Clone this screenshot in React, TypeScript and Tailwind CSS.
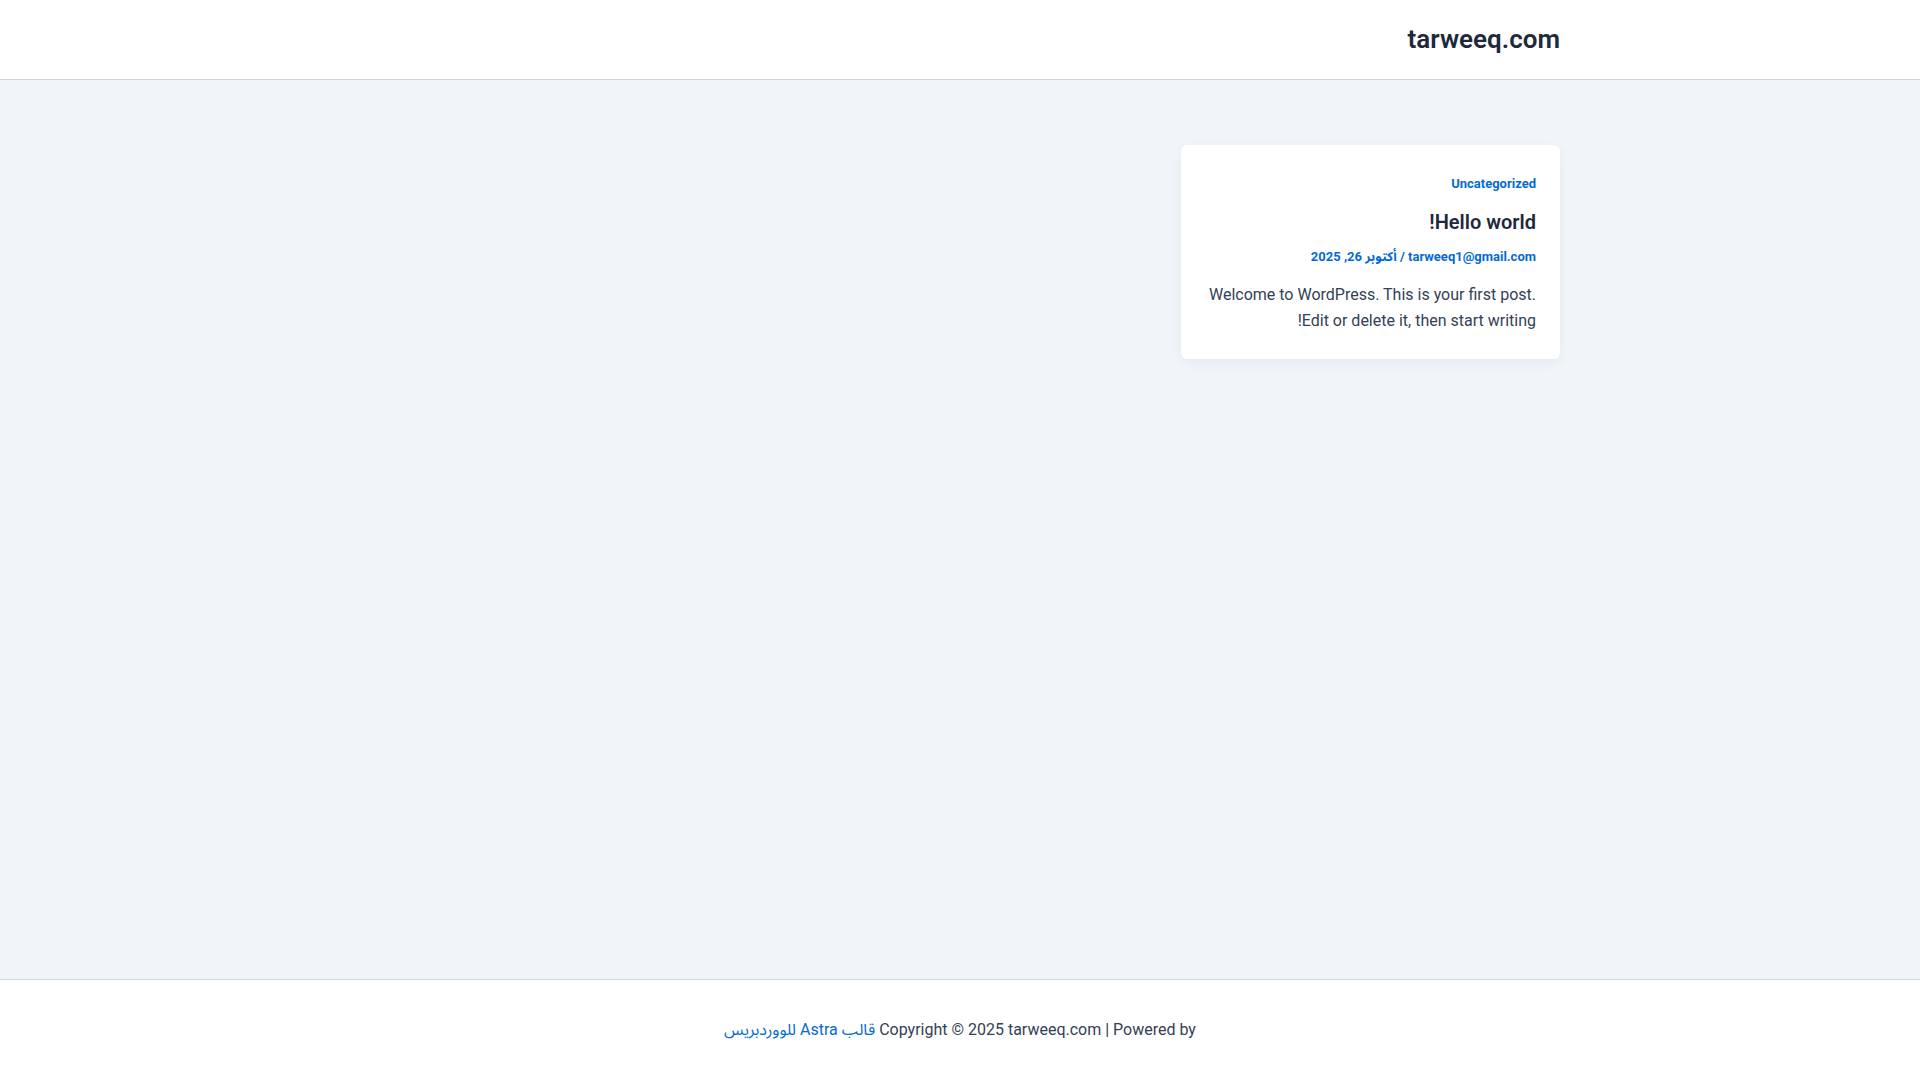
export default function App() {
  return (
    <div
      dir="rtl"
      className="min-h-screen flex flex-col bg-[#f0f5fa] text-[#334155]"
      style={{ fontFamily: 'Roboto, "Noto Sans Arabic", "Noto Naskh Arabic", sans-serif' }}
    >
      <header className="h-[80px] bg-white border-b border-[#d1d5db] shrink-0">
        <div className="max-w-[1200px] mx-auto h-full flex items-center">
          <a href="#" className="-mt-[2px] text-[26px] font-semibold text-[#1e293b] leading-none">
            tarweeq.com
          </a>
        </div>
      </header>

      <main className="flex-1 pt-[65px]">
        <div className="max-w-[1200px] mx-auto grid grid-cols-3 gap-8">
          <article className="bg-white rounded-md px-6 pt-6 pb-[25px] shadow-[0_4px_12px_rgba(15,23,42,0.05)]">
            <div className="text-[13px] font-bold text-[#046bd2] leading-[1.6] pt-[5px]">
              Uncategorized
            </div>
            <h2 className="mt-[13px] text-[20px] font-semibold text-[#1e293b] leading-[1.4]">
              Hello world!
            </h2>
            <div className="mt-[11px] text-[13px] font-bold text-[#046bd2] leading-[1.6]">
              tarweeq1@gmail.com / أكتوبر 26, 2025
            </div>
            <p className="mt-[14px] text-[16px] leading-[1.65]">
              Welcome to WordPress. This is your first post. Edit or delete it, then start writing!
            </p>
          </article>
        </div>
      </main>

      <footer className="h-[101px] shrink-0 bg-white border-t border-[#d1d5db] flex items-center justify-center">
        <p className="text-[16px] leading-[1.6] text-[#334155]">
          Copyright © 2025 tarweeq.com | Powered by{' '}
          <a href="#" className="text-[#046bd2]">
            قالب Astra للووردبريس
          </a>
        </p>
      </footer>
    </div>
  );
}
